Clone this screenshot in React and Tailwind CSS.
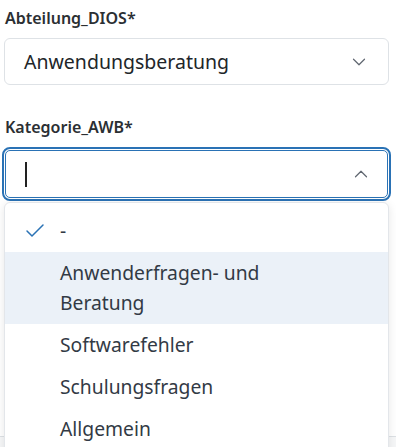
import { ChevronDown, ChevronUp, Check } from 'lucide-react'

const options = [
  { label: '-', selected: true },
  { label: 'Anwenderfragen- und Beratung', active: true },
  { label: 'Softwarefehler' },
  { label: 'Schulungsfragen' },
  { label: 'Allgemein' },
]

export default function App() {
  return (
    <div className="relative w-[396px] h-[447px] overflow-hidden bg-white text-[#212529] font-['Noto_Sans',sans-serif]">
      <div className="px-[4px] pt-[6px]">
        <label className="block pl-[1px] text-[16px] font-semibold leading-[24px] text-[#2b2f33]">Abteilung_DIOS*</label>
        <div className="mt-[8px] w-[385px] h-[47px] flex items-center justify-between pl-[19px] pr-[18px] border border-[#dee2e6] rounded-[6px]">
          <span className="text-[19.5px] leading-[28px]">Anwendungsberatung</span>
          <ChevronDown size={22} strokeWidth={1.3} className="text-[#5f6670]" />
        </div>

        <label className="block mt-[30px] pl-[1px] text-[16px] font-semibold leading-[24px] text-[#2b2f33]">Kategorie_AWB*</label>
        <div className="mt-[8px] -ml-[2px] w-[389px] h-[54px] rounded-[8px] border-[2px] border-[#2a72b5] p-[1px]">
          <div className="h-full rounded-[5px] border border-[#2a72b5] flex items-center justify-between pl-[19px] pr-[15px]">
            <span className="w-[1.5px] h-[25px] bg-[#222]" />
            <ChevronUp size={22} strokeWidth={1.3} className="text-[#5f6670]" />
          </div>
        </div>
      </div>

      <div className="absolute left-0 right-0 top-[436px] h-[12px] border-t border-[#dde1e5] bg-[#f6f7f8]" />

      <div className="absolute left-[4px] top-[202px] w-[385px] h-[260px] bg-white border border-[#e3e6ea] rounded-t-[6px] shadow-[0_2px_10px_rgba(0,0,0,0.10)] pt-[7px]">
        {options.map((o) => (
          <div
            key={o.label}
            className={`flex items-start pl-[18px] pr-[20px] py-[6px] ${o.active ? 'bg-[#ebf1f8]' : ''}`}
          >
            <span className="w-[37px] h-[30px] flex items-center shrink-0">
              {o.selected && <Check size={24} strokeWidth={1.5} className="text-[#2a72b5]" />}
            </span>
            <span className="text-[19.3px] leading-[30px] text-[#323a45] w-[240px]">{o.label}</span>
          </div>
        ))}
      </div>
    </div>
  )
}
